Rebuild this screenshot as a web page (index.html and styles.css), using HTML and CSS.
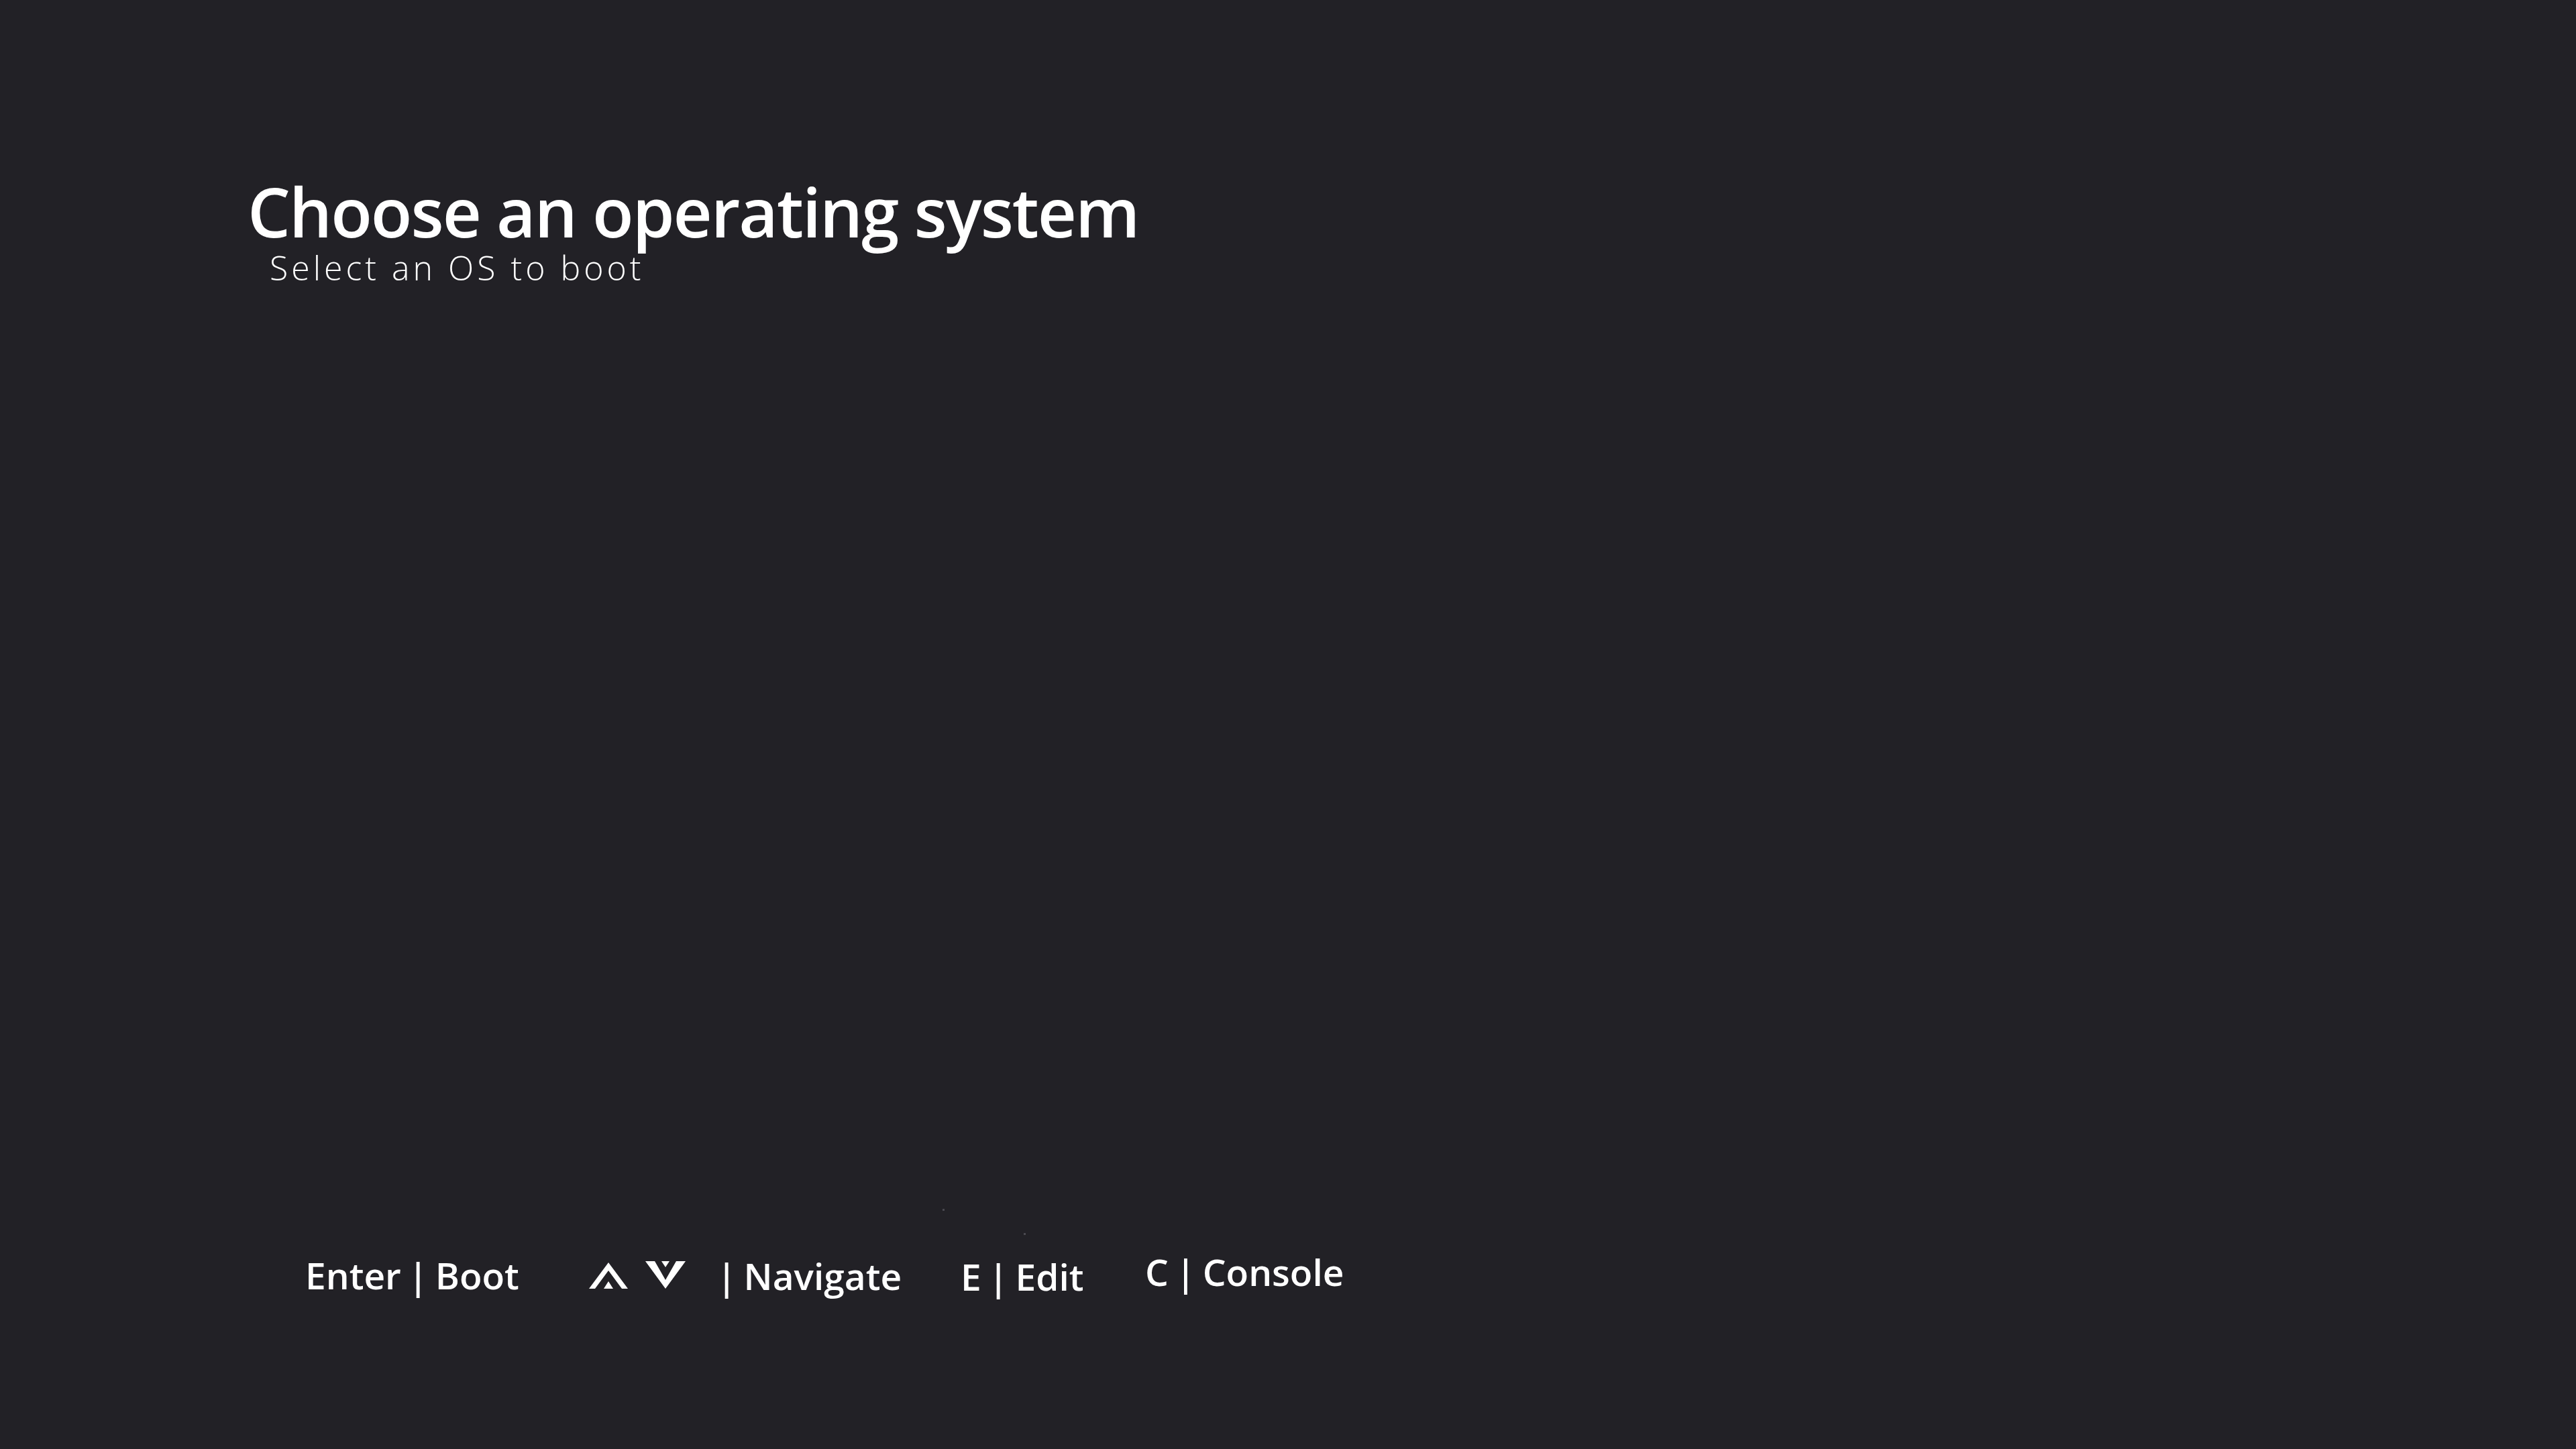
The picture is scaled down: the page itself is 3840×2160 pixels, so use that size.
FILE: index.html
```html
<!DOCTYPE html>
<html lang="en">
<head>
<meta charset="utf-8">
<title>Choose an operating system</title>
<link rel="stylesheet" href="styles.css">
</head>
<body>
<div class="screen">
  <header class="head">
    <h1 class="title">Choose an operating system</h1>
    <p class="subtitle">Select an OS to boot</p>
  </header>
  <footer class="keys">
    <span class="speck speck-a"></span>
    <span class="speck speck-b"></span>
    <div class="key key-boot">Enter | Boot</div>
    <div class="key key-arrows">
      <svg class="arrow" width="60" height="40" viewBox="0 0 60 40" aria-hidden="true">
        <polygon points="30,0 59,39 50,39 30,12 10,39 1,39" fill="#fff"/>
        <polygon points="30,28 37,39 23,39" fill="#fff"/>
      </svg>
      <svg class="arrow arrow-down" width="60" height="41" viewBox="0 0 60 41" aria-hidden="true">
        <polygon points="0,0 14,0 30,28 46,0 60,0 30,41" fill="#fff"/>
        <polygon points="24,0 36,0 30,9" fill="#fff"/>
      </svg>
    </div>
    <div class="key key-nav">| Navigate</div>
    <div class="key key-edit">E | Edit</div>
    <div class="key key-console">C | Console</div>
  </footer>
</div>
</body>
</html>
```

FILE: styles.css
```css
html, body {
  margin: 0;
  padding: 0;
  background: #222126;
}

body {
  color: #ffffff;
  font-family: "Open Sans", "Noto Sans", sans-serif;
}

.screen {
  width: 3840px;
  height: 2160px;
  display: flex;
  flex-direction: column;
  box-sizing: border-box;
  padding-top: 255px;
}

.head {
  padding-left: 369px;
}

.title {
  margin: 0;
  font-size: 101px;
  line-height: 121px;
  font-weight: 600;
  letter-spacing: -2px;
}

.subtitle {
  margin: 3px 0 0 33px;
  font-size: 50px;
  line-height: 40px;
  font-weight: 300;
  letter-spacing: 5px;
}

.keys {
  position: relative;
  margin-top: 1449px;
  display: grid;
  grid-template-columns: 422px 191px 364px 275px auto;
  align-items: start;
  padding-left: 455px;
  font-size: 55px;
  line-height: 55px;
  font-weight: 600;
  word-spacing: -4px;
}

.key {
  white-space: nowrap;
}

.key-boot { margin-top: 5px; }
.key-nav { margin-top: 6px; }
.key-edit { margin-top: 7px; }
.key-console { margin-top: 0; }

.key-arrows {
  display: flex;
  align-items: flex-start;
  gap: 25px;
  margin-top: 14px;
}

.arrow { display: block; }
.arrow-down { margin-top: -2px; }

.speck {
  position: absolute;
  width: 3px;
  height: 3px;
  background: #4a4950;
}
.speck-a { left: 1405px; top: -66px; }
.speck-b { left: 1526px; top: -30px; }
```
